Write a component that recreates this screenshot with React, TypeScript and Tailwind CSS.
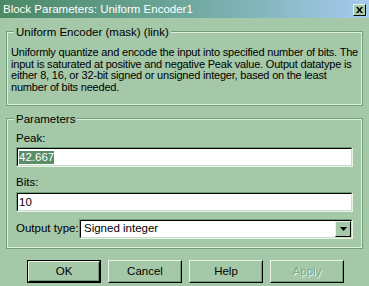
import React from "react";

const font = { fontFamily: '"Liberation Sans", Arial, sans-serif' };

function Etched({ label, className, children }: { label: string; className?: string; children: React.ReactNode }) {
  return (
    <div className={"relative border-2 border-[#6f9f78] " + (className ?? "")}>
      <div className="border border-[#dcefdc] -m-px h-[calc(100%+2px)]">
        {children}
      </div>
      <span className="absolute left-[6px] top-[-8px] bg-[#a4c8a8] px-[2px] text-[11.5px] leading-[14px] text-black whitespace-nowrap">
        {label}
      </span>
    </div>
  );
}

function Edit({ children, className }: { children: React.ReactNode; className?: string }) {
  return (
    <div className={"h-[20px] border border-t-[#6f9f78] border-l-[#6f9f78] border-b-[#e6f3e6] border-r-[#e6f3e6] " + (className ?? "")}>
      <div className="h-full border border-t-black border-l-black border-b-[#c8dcc8] border-r-[#c8dcc8] bg-white flex items-center pl-[1px] text-[11.5px] leading-[14px] text-black">
        {children}
      </div>
    </div>
  );
}

function Btn({ children, def, disabled }: { children: React.ReactNode; def?: boolean; disabled?: boolean }) {
  return (
    <div className={"w-[74px] h-[23px] " + (def ? "border border-black" : "")}>
      <div className="h-full border border-t-[#e6f3e6] border-l-[#e6f3e6] border-b-black border-r-black">
        <div className="h-full border border-t-[#a4c8a8] border-l-[#a4c8a8] border-b-[#6f9f78] border-r-[#6f9f78] flex items-center justify-center text-[11.5px]">
          {disabled ? (
            <span className="text-[#7aa882] [text-shadow:1px_1px_0_#e6f3e6]">{children}</span>
          ) : (
            <span className="text-black">{children}</span>
          )}
        </div>
      </div>
    </div>
  );
}

export default function App() {
  return (
    <div className="w-[369px] h-[286px] bg-[#a4c8a8] overflow-hidden flex flex-col" style={font}>
      <div className="h-[18px] shrink-0 bg-gradient-to-r from-[#4b8966] via-[#6ea79c] to-[#a6cbef] flex items-center justify-between pl-[3px] pr-[3px]">
        <span className="text-white text-[11.5px] leading-[16px] whitespace-nowrap">Block Parameters: Uniform Encoder1</span>
        <div className="w-[13px] h-[12px] mt-[2px] bg-[#a4c8a8] border border-t-[#e6f3e6] border-l-[#e6f3e6] border-b-black border-r-black flex items-center justify-center">
          <svg width="7" height="6" viewBox="0 0 7 6">
            <path d="M0 0h2l1.5 2 1.5-2h2L4.5 3 7 6H5L3.5 4 2 6H0l2.5-3z" fill="black" />
          </svg>
        </div>
      </div>

      <Etched label="Uniform Encoder (mask) (link)" className="mx-[6px] mt-[13px] h-[75px] shrink-0">
        <div className="pt-[14px] pl-[3px] text-[11px] leading-[11.6px] tracking-[-0.2px] text-black whitespace-nowrap">
          Uniformly quantize and encode the input into specified number of bits. The<br />
          input is saturated at positive and negative Peak value. Output datatype is<br />
          either 8, 16, or 32-bit signed or unsigned integer, based on the least<br />
          number of bits needed.
        </div>
      </Etched>

      <Etched label="Parameters" className="mx-[6px] mt-[12px] h-[131px] shrink-0">
        <div className="pl-[8px] pr-[8px]">
          <div className="pt-[12px] h-[23px] text-[11.5px] leading-[12px] text-black">Peak:</div>
          <Edit className="mt-[4px]">
            <span className="bg-[#5a8d66] text-white leading-[13px]">42.667</span>
          </Edit>
          <div className="mt-[9px] h-[12px] text-[11.5px] leading-[12px] text-black">Bits:</div>
          <Edit className="mt-[4px]">10</Edit>
          <div className="mt-[7px] flex items-center h-[20px]">
            <span className="w-[63px] text-[11.5px] text-black whitespace-nowrap">Output type:</span>
            <div className="flex-1 h-[20px] border border-t-[#6f9f78] border-l-[#6f9f78] border-b-[#e6f3e6] border-r-[#e6f3e6]">
              <div className="h-full border border-t-black border-l-black border-b-[#c8dcc8] border-r-[#c8dcc8] bg-white flex items-center">
                <span className="flex-1 pl-[3px] text-[11.5px] text-black">Signed integer</span>
                <div className="w-[16px] h-full bg-[#a4c8a8] border border-t-[#e6f3e6] border-l-[#e6f3e6] border-b-black border-r-black flex items-center justify-center">
                  <svg width="7" height="4" viewBox="0 0 7 4">
                    <path d="M0 0h7L3.5 4z" fill="black" />
                  </svg>
                </div>
              </div>
            </div>
          </div>
        </div>
      </Etched>

      <div className="mt-[11px] pl-[27px] flex gap-[7px] shrink-0">
        <Btn def>OK</Btn>
        <Btn>Cancel</Btn>
        <Btn>Help</Btn>
        <Btn disabled>Apply</Btn>
      </div>
    </div>
  );
}
